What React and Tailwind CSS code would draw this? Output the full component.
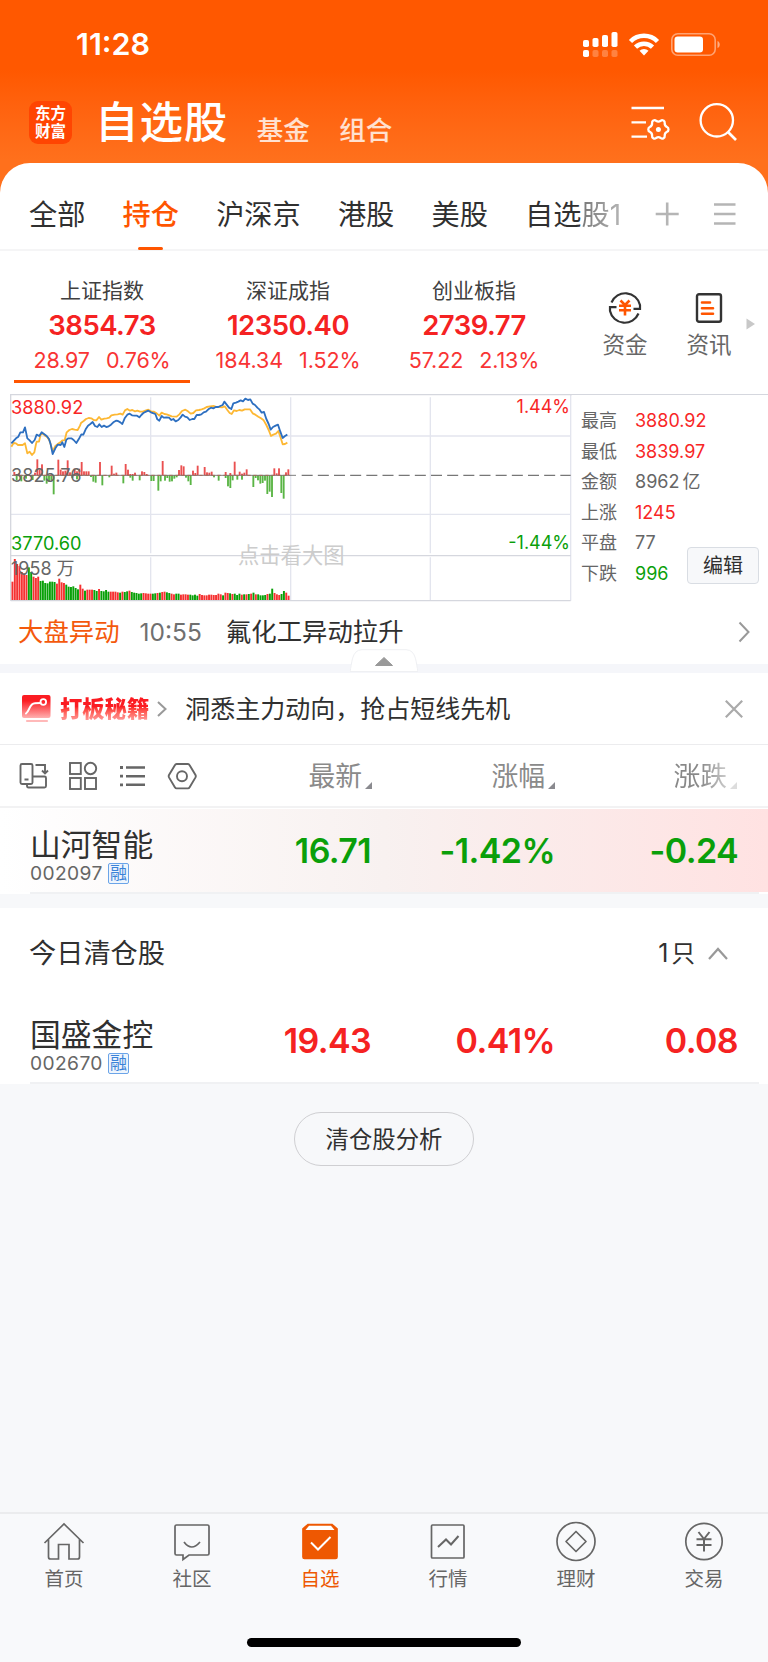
const tabs = ['全部', '持仓', '沪深京', '港股', '美股'];

const indices = [
  { name: '上证指数', value: '3854.73', change: '28.97', percent: '0.76%', active: true },
  { name: '深证成指', value: '12350.40', change: '184.34', percent: '1.52%' },
  { name: '创业板指', value: '2739.77', change: '57.22', percent: '2.13%' },
];

const stats = [
  { label: '最高', value: '3880.92', color: 'text-[#f82626]' },
  { label: '最低', value: '3839.97', color: 'text-[#f82626]' },
  { label: '金额', value: '8962', unit: '亿', color: 'text-[#666]' },
  { label: '上涨', value: '1245', color: 'text-[#f82626]' },
  { label: '平盘', value: '77', color: 'text-[#666]' },
  { label: '下跌', value: '996', color: 'text-[#0a9f0a]' },
];

const priceLine =
  '34,175 48,160 55,155 61,142 69,142 75,127 82,160 89,166 96,174 104,165 110,149 118,153 125,142 132,147 140,153 147,162 152,178 158,207 166,190 173,179 182,180 187,172 193,186 199,164 205,160 214,160 221,165 229,174 236,163 244,148 250,149 257,133 264,122 271,117 278,111 285,123 292,126 298,118 305,126 312,122 319,126 326,124 333,119 340,112 348,107 354,108 361,112 367,117 374,100 382,89 389,86 396,91 404,92 411,92 418,97 424,90 430,84 438,80 445,77 453,82 461,85 466,87 472,103 478,107 485,93 491,98 500,97 507,98 514,105 520,102 527,109 535,105 542,97 548,89 555,95 562,97 569,105 577,102 583,102 590,90 597,90 604,88 611,82 618,80 625,73 633,68 640,70 647,66 655,66 661,63 668,60 673,50 680,59 687,68 694,72 700,55 708,53 715,50 722,46 729,49 736,41 744,45 751,43 758,56 765,60 772,68 778,73 785,83 792,81 799,102 806,117 812,134 819,126 827,122 834,119 841,140 848,159 855,153 862,149';

const averageLine =
  '34,185 41,174 48,175 54,180 68,180 75,175 82,205 89,200 96,210 103,202 108,177 110,170 117,170 122,148 128,146 135,152 142,156 149,168 158,199 166,183 172,178 181,172 187,166 194,166 200,142 208,135 216,132 224,134 233,135 240,122 243,114 251,108 258,102 266,99 274,100 281,105 289,106 297,96 304,104 313,101 320,100 328,98 334,91 344,89 353,88 361,86 368,89 375,76 382,72 390,77 397,75 405,79 412,77 420,80 428,80 436,77 445,74 453,79 462,80 470,85 478,92 485,83 493,87 500,88 508,91 515,94 530,95 538,88 546,78 556,74 564,79 572,86 580,84 588,76 597,75 605,73 613,70 620,66 630,64 642,63 650,66 658,66 666,67 674,64 682,75 689,84 695,87 702,76 710,78 718,75 726,77 734,73 750,73 758,85 766,89 775,95 783,100 791,106 799,120 806,135 813,153 820,149 828,146 835,138 842,158 848,178 855,177 862,173';

const upBars = [
  [43, 10], [57, 6], [105, 8], [112, 48], [119, 18], [126, 33], [175, 47], [182, 17], [189, 12], [196, 14], [203, 45],
  [210, 9], [224, 20], [231, 12], [238, 20], [245, 40], [252, 12], [259, 12], [266, 12], [300, 40], [335, 29], [342, 5],
  [349, 8], [377, 34], [384, 17], [391, 4], [398, 4], [405, 8], [426, 12], [433, 10], [440, 4], [488, 43], [537, 16],
  [544, 30], [551, 27], [579, 14], [586, 7], [593, 29], [614, 25], [621, 9], [628, 8], [635, 11], [677, 10], [691, 7],
  [704, 41], [719, 11], [726, 5], [733, 8], [740, 18], [823, 21], [830, 6], [837, 21], [858, 9], [865, 18],
];

const downBars = [
  [50, 15], [64, 18], [78, 10], [98, 14], [133, 16], [140, 25], [147, 18], [154, 14], [161, 57], [217, 8], [231, 12],
  [273, 5], [280, 19], [287, 22], [307, 30], [328, 6], [370, 24], [391, 7], [398, 16], [419, 15], [454, 17], [461, 17],
  [475, 46], [482, 18], [495, 16], [502, 8], [509, 19], [516, 18], [523, 10], [530, 6], [558, 7], [565, 18], [572, 29],
  [642, 6], [656, 16], [677, 8], [684, 33], [691, 38], [698, 15], [712, 13], [726, 13], [760, 35], [767, 8], [774, 15],
  [781, 25], [788, 23], [795, 16], [802, 56], [809, 49], [816, 65], [844, 53], [851, 70],
];

// volume per minute, r = up, g = down
const volumes =
  'r55 r123 r108 r102 r84 r80 r75 g98 g84 r70 r66 r70 g57 g58 g51 g50 g55 g55 g54 r49 r64 r53 r51 g46 g40 g39 g41 g36 g32 r46 r34 g28 r31 r31 r31 g30 g27 r33 g27 g26 g30 g25 r25 r25 r25 r23 g22 r25 g24 g26 r28 g24 g22 g21 g19 g20 r21 r20 r19 r19 g19 g20 r21 g22 r24 r25 g23 g21 r19 r17 g19 g19 r16 r17 r17 r16 g16 g14 g16 g13 r18 r15 r14 r14 r16 r16 r15 r15 r19 r17 g14 r22 r21 g20 r18 g19 g15 g19 r16 g17 r17 g18 r19 g22 r17 g17 g14 g14 g15 r18 g19 g34 r21 r17 r15 g18 g27 r22 r13';

const volumeBars = volumes.split(' ').map((item) => ({ up: item[0] === 'r', size: Number(item.slice(1)) }));

const stocks = [
  { name: '山河智能', code: '002097', price: '16.71', percent: '-1.42%', change: '-0.24', color: 'text-[#0a9f0a]' },
  { name: '国盛金控', code: '002670', price: '19.43', percent: '0.41%', change: '0.08', color: 'text-[#f52222]' },
];

function StatusBar() {
  return (
    <div className="flex h-[84px] items-center justify-between pl-[76px] pr-[47px] pt-[3px]">
      <span className="pt-px text-[30.500px] font-semibold leading-none">11:28</span>
      <svg width="139" height="28" viewBox="581 29 139 28" fill="#fff">
        <rect x="582" y="39" width="6" height="7" rx="1.8" />
        <rect x="591.500" y="37" width="6" height="9" rx="1.800" />
        <rect x="601" y="34" width="6" height="12" rx="1.8" />
        <rect x="610.500" y="31" width="6" height="15" rx="1.8" />
        <rect x="582" y="49" width="6" height="7" rx="1.8" />
        <rect x="591.500" y="49" width="6" height="7" rx="1.8" opacity="0.25" />
        <rect x="601" y="49" width="6" height="7" rx="1.8" opacity="0.25" />
        <rect x="610.500" y="49" width="6" height="7" rx="1.8" opacity="0.25" />
        <g fill="none" stroke="#fff" strokeWidth="4.500">
          <path d="M629.500 40.500a19 19 0 0 1 27 0" />
          <path d="M634.500 46.200a12 12 0 0 1 17 0" />
        </g>
        <path d="M638.500 49.800a6.500 6.500 0 0 1 9 0L643 54.500z" />
        <rect x="670.800" y="32.800" width="43.400" height="21.400" rx="6" fill="none" stroke="#fff" strokeWidth="1.6" opacity="0.45" />
        <rect x="673.500" y="35.500" width="28.500" height="16" rx="3.200" />
        <path d="M716.500 40c3 1 3 6 0 7z" opacity="0.5" />
      </svg>
    </div>
  );
}

function Header() {
  return (
    <div className="flex h-[79px] items-center pb-[2px] pl-[29px] pr-[31px]">
      <div className="flex size-[43px] flex-col items-center justify-center rounded-[9px] bg-[#ff4502] text-[15.5px] font-bold leading-[17.5px]">
        <span>东方</span>
        <span>财富</span>
      </div>
      <h1 className="ml-[23px] text-[43.500px] font-medium leading-none tracking-[0.900px]">自选股</h1>
      <span className="ml-[28.500px] mt-[16px] text-[26.500px] font-medium leading-none text-white/80">基金</span>
      <span className="ml-[29.500px] mt-[16px] text-[26.500px] font-medium leading-none text-white/80">组合</span>
      <svg className="mb-[2px] ml-auto" width="107" height="40" viewBox="630 102 107 40" fill="none" stroke="#fff" strokeWidth="2.300">
        <path d="M631.500 108h32.500M631.500 122.300h14.500M631.500 136.600h15.500" />
        <path
          d="M653.300 120.600q1.500-1 2.800.2q2.300 1.600 4.600 0q1.300-1.200 2.800-.2q1.400.8 1.200 2.400q-.2 2.800 2.300 4q1.500.7 1.500 2.400t-1.500 2.400q-2.500 1.200-2.300 4q.2 1.600-1.200 2.400q-1.500 1-2.800-.2q-2.300-1.600-4.600 0q-1.300 1.200-2.800.2q-1.400-.8-1.200-2.400q.2-2.800-2.300-4q-1.500-.7-1.500-2.400t1.500-2.400q2.500-1.200 2.300-4q-.2-1.600 1.200-2.400z"
          strokeLinejoin="round"
        />
        <circle cx="658.400" cy="129.400" r="2.500" fill="#fff" stroke="none" />
        <circle cx="716.800" cy="120.300" r="16.200" />
        <path d="M728 132l8 8" strokeWidth="2.600" />
      </svg>
    </div>
  );
}

function CategoryTabs() {
  return (
    <div className="flex h-[88px] items-center border-b-2 border-[#f5f5f6] pl-[29px] pr-[31px] text-[28.200px] leading-none text-[#303030]">
      <div className="flex h-full items-center gap-[37.200px]">
        {tabs.map((tab) => (
          <div
            key={tab}
            className={`${tab === '持仓' ? 'font-medium text-[#ff5500]' : ''} relative flex h-full items-center pt-[18px]`}
          >
            {tab}
            {tab === '持仓' && <span className="absolute bottom-[-1px] left-[15.500px] h-[3px] w-[25px] rounded-full bg-[#ff5500]" />}
          </div>
        ))}
        <div className="pt-[18px]">
          <span>自选</span>
          <span className="bg-linear-to-r from-[#777] to-[#b5b5b5] bg-clip-text text-transparent">股1</span>
        </div>
      </div>
      <svg className="ml-auto mt-[15px]" width="82" height="26" viewBox="655 201 82 26" stroke="#b5b5b5" strokeWidth="2.600">
        <path d="M655.700 214h23M667.200 202.500v23M714 204.500h21.500M714 214h21.500M714 223.500h21.500" />
      </svg>
    </div>
  );
}

function IndexPanel() {
  return (
    <div className="flex h-[143px] pl-[9px]">
      {indices.map((item) => (
        <div key={item.name} className="relative flex w-[186px] flex-col items-center">
          <span className="mt-[28px] text-[21px] leading-[24px] text-[#404040]">{item.name}</span>
          <span className="mt-[6px] text-[27.5px] font-semibold leading-[32px] tracking-[-0.5px] text-[#f52222]">{item.value}</span>
          <span className="mt-[7px] flex gap-[16px] text-[21.500px] leading-[24px] tracking-[-0.1px] text-[#f83434]">
            <span>{item.change}</span>
            <span>{item.percent}</span>
          </span>
          {item.active && <span className="absolute bottom-[11px] left-[5px] h-[3px] w-[176px] bg-[#ff5500]" />}
        </div>
      ))}
      <div className="ml-[16px] flex w-[84px] flex-col items-center pt-[40px] text-[22.500px] leading-none text-[#666]">
        <svg width="34" height="34" viewBox="0 0 34 34" fill="none" stroke="#333" strokeWidth="2.200">
          <path d="M3.500 11.500A15 15 0 0 1 32 14v3.800h-6.500M30.500 22.500A15 15 0 0 1 2 20v-3.800h6.500" />
          <path d="M12.500 9.500l4.500 4.500 4.500-4.500M11 14.700h12M11 19.200h12M17 14v10.500" stroke="#ff5500" strokeWidth="2.600" />
        </svg>
        <span className="mt-[9px]">资金</span>
      </div>
      <div className="flex w-[84px] flex-col items-center pt-[40px] text-[22.500px] leading-none text-[#666]">
        <svg width="34" height="34" viewBox="0 0 34 34" fill="none" stroke="#333" strokeWidth="2.400">
          <rect x="5" y="3.200" width="24" height="27.500" rx="2" />
          <path d="M10 11.500h8M10 17.200h11M10 22.800h11" stroke="#ff5500" strokeWidth="2.600" strokeLinecap="round" />
        </svg>
        <span className="mt-[9px]">资讯</span>
      </div>
      <svg className="mt-[67px] -ml-[5px]" width="10" height="12" viewBox="0 0 10 12">
        <path d="M0.500 0.500v11L9 6z" fill="#c8c8c8" />
      </svg>
    </div>
  );
}

function MarketChart() {
  return (
    <div className="relative h-[208px] w-[562px]">
      <svg width="562" height="208" viewBox="30 27 1686 624" fill="none">
        <g stroke="#e3e5ee" strokeWidth="4">
          <path d="M32 153H1712M32 388H1712" />
          <path d="M452 37V505M872 37V505M1291 37V505M452 517V645M872 517V645M1291 517V645M1712 28V647" />
        </g>
        <path d="M1716 28.500H32V647M32 512H1712M32 647H1712" stroke="#d5d7de" strokeWidth="4" />
        {upBars.map(([x, size]) => (
          <rect key={`u${x}`} x={x - 2.800} y={271 - size} width="5.600" height={size} fill="#ea5050" />
        ))}
        {downBars.map(([x, size]) => (
          <rect key={`d${x}`} x={x - 2.800} y="271" width="5.600" height={size} fill="#5ab545" />
        ))}
        <path d="M36 271H888" stroke="#666" strokeWidth="2.500" />
        <path d="M40 271H870" stroke="#a66a5a" strokeWidth="3" strokeDasharray="10 8" />
        <path d="M905 271H1712" stroke="#777" strokeWidth="4" strokeDasharray="33 15.500" />
        {volumeBars.map((bar, i) => (
          <rect key={i} x={34.500 + i * 7.020} y={645 - bar.size} width="5.800" height={bar.size} fill={bar.up ? '#f53131' : '#08a008'} />
        ))}
        <polyline points={averageLine} stroke="#fdb834" strokeWidth="5.500" strokeLinejoin="round" />
        <polyline points={priceLine} stroke="#2d6fc0" strokeWidth="5.500" strokeLinejoin="round" />
      </svg>
      <span className="absolute left-px top-[4px] text-[18.200px] leading-[18px] text-[#f82626]">3880.92</span>
      <span className="absolute left-px top-[72px] text-[18.200px] leading-[18px] text-[#666]">3825.76</span>
      <span className="absolute left-px top-[140px] text-[18.200px] leading-[18px] text-[#0a9f0a]">3770.60</span>
      <span className="absolute left-px top-[166px] text-[18px] leading-[18px] text-[#666]">1958 万</span>
      <span className="absolute right-[2px] top-[4px] text-[18px] leading-[18px] text-[#f82626]">1.44%</span>
      <span className="absolute right-[2px] top-[140px] text-[18px] leading-[18px] text-[#0a9f0a]">-1.44%</span>
      <span className="absolute left-[228px] top-[150px] text-[21.300px] leading-[22px] text-[#ccc]">点击看大图</span>
    </div>
  );
}

function MarketStats() {
  return (
    <div className="relative flex-1 border-t border-[#d5d7de] pl-[9px] pt-[10.500px] text-[18px] text-[#666]">
      {stats.map((item) => (
        <div key={item.label} className="flex h-[30.500px] items-center">
          <span className="w-[54px]">{item.label}</span>
          <span className={item.color}>
            {item.value}
            {item.unit && <span className="ml-[3px]">{item.unit}</span>}
          </span>
        </div>
      ))}
      <button className="absolute left-[115px] top-[152px] flex h-[37px] w-[72px] items-center justify-center rounded border border-[#d9dde3] bg-[#f7f8fa] text-[20px] leading-none text-[#303030]">
        编辑
      </button>
    </div>
  );
}

function NewsRow() {
  return (
    <div className="relative flex h-[71px] items-start border-b-[9px] border-[#f5f6fa] pl-[18px] pr-[18px] pt-[12px]">
      <div className="flex h-[36px] w-full items-center text-[25.400px] leading-none">
        <span className="text-[#f4590c]">大盘异动</span>
        <span className="ml-[20px] text-[24.500px] text-[#707070]">10:55</span>
        <span className="ml-[24px] text-[#303030]">氟化工异动拉升</span>
        <svg className="ml-auto" width="12" height="22" viewBox="0 0 12 22" fill="none" stroke="#999" strokeWidth="2">
          <path d="M1.500 1.500L10.500 11L1.500 20.500" />
        </svg>
      </div>
      <svg className="absolute left-[350px] top-[47px]" width="68" height="23" viewBox="0 0 68 23">
        <path d="M0 22.500C2 16 1 .7 12 .7H56c11 0 10 15.300 12 21.800z" fill="#fff" stroke="#eff0f3" />
        <path d="M34 8.500l8.500 8H25.500z" fill="#999" stroke="#999" strokeLinejoin="round" />
      </svg>
    </div>
  );
}

function PromoRow() {
  return (
    <div className="flex h-[72px] items-center border-b border-[#ececee] pl-[21px] pr-[25px]">
      <svg width="30" height="29" viewBox="0 0 30 29" fill="none">
        <defs>
          <linearGradient id="promo" x1="0" y1="0" x2="0" y2="1">
            <stop offset="0.250" stopColor="#fb1c22" />
            <stop offset="1" stopColor="#ffb0b0" />
          </linearGradient>
        </defs>
        <rect x="1" y="1" width="28.500" height="23" rx="2" fill="url(#promo)" />
        <path d="M5 19.500C9 17 8 9.500 14 9.300L19.500 9" stroke="#fff" strokeWidth="2" strokeLinecap="round" />
        <circle cx="22.300" cy="8" r="2.800" stroke="#fff" strokeWidth="1.800" />
        <path d="M6 27h20" stroke="#ffb9b9" strokeWidth="2.200" strokeLinecap="round" />
      </svg>
      <span className="ml-[9px] bg-linear-to-b from-[#fb1c22] from-40% to-[#ff9c9c] bg-clip-text text-[22.300px] font-black leading-[24px] text-transparent">
        打板秘籍
      </span>
      <svg className="ml-[8px]" width="10" height="18" viewBox="0 0 10 18" fill="none" stroke="#999" strokeWidth="2">
        <path d="M1 2l7.500 7L1 16" />
      </svg>
      <span className="ml-[18px] pt-[2px] text-[25px] leading-none text-[#303030]">洞悉主力动向，抢占短线先机</span>
      <svg className="ml-auto" width="18" height="18" viewBox="0 0 18 18" stroke="#aaa" strokeWidth="2.200">
        <path d="M.8.800l16.400 16.400M17.200.800L.8 17.200" />
      </svg>
    </div>
  );
}

function SortHeader({ label, className, faded }) {
  return (
    <div className={`${className} flex items-center justify-end text-[26.800px] leading-none`}>
      <span className={`${faded ? 'bg-linear-to-r from-[#888] from-50% to-[#ccc] bg-clip-text text-transparent' : 'text-[#8a8a8a]'} pt-[2px]`}>
        {label}
      </span>
      <svg className="ml-[3px] mt-[20px]" width="7" height="7" viewBox="0 0 7 7">
        <path d="M7 0v7H0z" fill={faded ? '#ddd' : '#8a8a8f'} />
      </svg>
    </div>
  );
}

function ListHeader() {
  return (
    <div className="flex h-[63px] items-center border-b-2 border-[#f2f2f3] pl-[19px]">
      <svg width="178" height="30" viewBox="19 761 178 30" fill="none" stroke="#666" strokeWidth="1.900">
        <rect x="20.500" y="764" width="12" height="20" rx="1.500" />
        <path d="M24.500 779.500h4M35.500 765h9.500v8M42 770.500l3 3 3-3M32.500 776.500h12q1.500 0 1.500 1.500v8q0 1.500-1.500 1.500h-16q-1.500 0-1.500-2v-1.500" />
        <rect x="70" y="763" width="10.800" height="11" />
        <circle cx="90.500" cy="768.500" r="5.700" />
        <rect x="70" y="778" width="10.800" height="11" />
        <rect x="85" y="778" width="11" height="11" />
        <path d="M126 767.500h19M126 776.200h19M126 784.800h19" strokeWidth="2.600" />
        <path d="M120 767.500h3M120 776.200h3M120 784.800h3" strokeWidth="2.800" />
        <path d="M176.500 764h11.500q1 0 1.500 1l6 10q.6 1.200 0 2.400l-6 10q-.5 1-1.500 1h-11.500q-1 0-1.500-1l-6-10q-.6-1.200 0-2.400l6-10q.5-1 1.500-1z" />
        <circle cx="182" cy="776.200" r="5" />
      </svg>
      <SortHeader label="最新" className="w-[175px]" />
      <SortHeader label="涨幅" className="w-[183px]" />
      <SortHeader label="涨跌" className="w-[182px]" faded />
    </div>
  );
}

function StockRow({ stock, highlight }) {
  return (
    <div className={`${highlight ? 'bg-linear-to-r from-white via-[#f8f1f0] to-[#ffe2e2]' : ''} flex h-[83px] items-center pl-[30px] pr-[30px]`}>
      <div className="w-[180px] pt-[12px]">
        <div className="text-[30.800px] leading-[34px] text-[#303030]">{stock.name}</div>
        <div className="flex h-[24px] items-center text-[19.200px] leading-none text-[#666]">
          <span className="w-[78px] tracking-[0.400px]">{stock.code}</span>
          <span className="flex size-[21px] items-center justify-center rounded-[2px] border border-[#6ba4e8] bg-[#eef5fd] text-[17px] text-[#3b82d8]">融</span>
        </div>
      </div>
      <div className={`${stock.color} flex text-right text-[34px] font-semibold leading-none tracking-[-0.6px]`}>
        <span className="w-[161px]">{stock.price}</span>
        <span className="w-[184px]">{stock.percent}</span>
        <span className="w-[183px]">{stock.change}</span>
      </div>
    </div>
  );
}

function BottomNav() {
  const items = [
    {
      label: '首页',
      icon: <path d="M2.500 23L22 4l19.500 19M6.500 19.500V37q0 2 2 2h8V24.500h10.500V39h8.500q2 0 2-2V19.500" />,
    },
    {
      label: '社区',
      icon: <path d="M6.500 5h31q1.500 0 1.500 1.500v27q0 1.500-1.500 1.500H19l-6 4.500V35H6.500Q5 35 5 33.500v-27Q5 5 6.500 5zM14 22q7.500 10 16 0" />,
    },
    {
      label: '自选',
      active: true,
      icon: (
        <>
          <path d="M5 9L10 4.500h24L39 9v28q0 1.500-1.500 1.500h-31Q5 38.500 5 37z" fill="#ee5802" />
          <path d="M11 5.700h22l3.500 4.300h-29z" fill="#fff" stroke="none" />
          <path d="M13 22.500l7 7L32.500 17" stroke="#fff" strokeWidth="2" />
        </>
      ),
    },
    {
      label: '行情',
      icon: (
        <>
          <rect x="5.500" y="5" width="32.500" height="33" rx="1" />
          <path d="M12 27l8-7.500 5 5L32.500 16" strokeWidth="2" />
        </>
      ),
    },
    {
      label: '理财',
      icon: (
        <>
          <circle cx="22" cy="21.500" r="19" />
          <path d="M22 11.500L32 21.500L22 31.500L12 21.500z" strokeLinejoin="round" />
        </>
      ),
    },
    {
      label: '交易',
      icon: (
        <>
          <circle cx="22" cy="21.500" r="18.200" />
          <path d="M16.500 12l5.500 7 5.500-7M14.500 19.200h15M14.500 25h15M22 19v12.500" strokeWidth="2" />
        </>
      ),
    },
  ];

  return (
    <nav className="mt-auto h-[150px] border-t-2 border-[#ebecee] bg-[#f8f9fb]">
      <div className="flex">
        {items.map((item) => (
          <div
            key={item.label}
            className={`${item.active ? 'text-[#ee5802]' : 'text-[#666]'} flex w-1/6 flex-col items-center pt-[6px] text-[19.500px] leading-[24px]`}
          >
            <svg width="44" height="44" viewBox="0 0 44 44" fill="none" stroke="currentColor" strokeWidth="1.700">
              {item.icon}
            </svg>
            <span className="mt-[3px]">{item.label}</span>
          </div>
        ))}
      </div>
      <div className="mx-auto mt-[47px] h-[9px] w-[274px] rounded-full bg-black" />
    </nav>
  );
}

export default function App() {
  return (
    <div className="flex h-[1662px] w-[768px] flex-col overflow-hidden bg-[#f7f8fa] font-['Inter','Noto_Sans_CJK_SC',sans-serif] whitespace-nowrap">
      <header className="h-[200px] bg-linear-to-b from-[#ff5800] from-35% to-[#ff701c] to-80% text-white">
        <StatusBar />
        <Header />
      </header>
      <main className="-mt-[37px]">
        <section className="rounded-t-[30px] bg-white">
          <CategoryTabs />
          <IndexPanel />
          <div className="flex h-[208px] pl-[10px]">
            <MarketChart />
            <MarketStats />
          </div>
          <NewsRow />
        </section>
        <section className="bg-white">
          <PromoRow />
          <ListHeader />
          <div className="pt-[1px]">
            <StockRow stock={stocks[0]} highlight />
          </div>
          <div className="ml-[30px] mr-[9px] h-[2px] bg-[#f0f1f3]" />
        </section>
        <section className="mt-[14px] bg-white">
          <div className="flex h-[91px] items-center pl-[29px] pr-[40px] text-[27.200px] leading-none text-[#303030]">
            <span>今日清仓股</span>
            <span className="ml-auto text-[25px]">
              1<span className="ml-[3px] text-[23.500px]">只</span>
            </span>
            <svg className="ml-[13px]" width="20" height="13" viewBox="0 0 20 13" fill="none" stroke="#999" strokeWidth="2.200">
              <path d="M1 12l9-10 9 10" />
            </svg>
          </div>
          <StockRow stock={stocks[1]} />
          <div className="ml-[30px] mr-[9px] h-[2px] bg-[#f0f1f3]" />
        </section>
        <button className="mx-auto mt-[28px] flex h-[54px] w-[180px] items-center justify-center rounded-full border border-[#cfcfd2] pt-[1px] text-[23.400px] leading-none text-[#303030]">
          清仓股分析
        </button>
      </main>
      <BottomNav />
    </div>
  );
}
